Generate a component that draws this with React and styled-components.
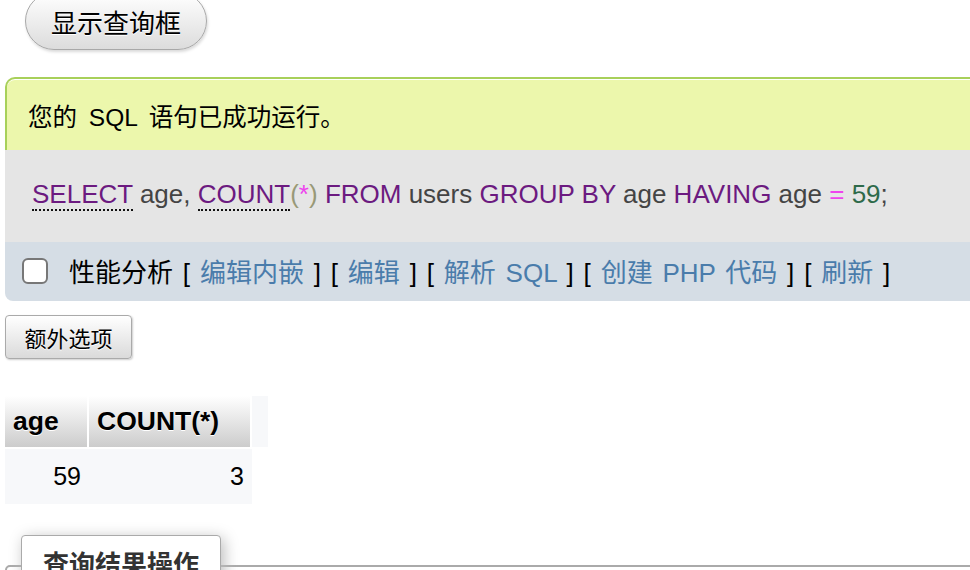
import React from 'react';
import styled, { createGlobalStyle } from 'styled-components';

const GlobalStyle = createGlobalStyle`
  html, body {
    margin: 0;
    padding: 0;
    background: #fff;
    overflow: hidden;
  }
  body {
    font-family: "Liberation Sans", "Noto Sans CJK SC", sans-serif;
    color: #000;
  }
`;

const Page = styled.div`
  display: flex;
  flex-direction: column;
  align-items: flex-start;
  padding-left: 5px;
  width: 1100px;
`;

const PillButton = styled.button`
  margin: -8px 0 0 20px;
  width: 182px;
  height: 58px;
  padding: 0 0 0;
  border: 1px solid #a8a8a8;
  border-radius: 30px;
  background: linear-gradient(#ffffff, #dcdcdc);
  box-shadow: 1px 2px 3px rgba(0, 0, 0, 0.15);
  font-family: inherit;
  font-size: 26px;
  color: #000;
  text-shadow: 0 1px 0 #fff;
`;

const ResultBox = styled.div`
  margin-top: 27px;
  width: 1060px;
  display: flex;
  flex-direction: column;
`;

const Success = styled.div`
  height: 69px;
  display: flex;
  align-items: center;
  padding: 2px 0 0 21px;
  background: #ecf7ac;
  border-top: 2px solid #a8d05a;
  border-left: 2px solid #a8d05a;
  border-top-left-radius: 10px;
  box-shadow: inset 0 1px 0 #fff;
  font-size: 24.5px;
  word-spacing: 5px;
  white-space: pre;
`;

const SqlBlock = styled.div`
  height: 88px;
  display: flex;
  align-items: center;
  padding: 0 0 4px 27px;
  background: #e5e5e5;
  font-size: 26px;
  color: #444;
`;

const Code = styled.code`
  font-family: inherit;
  white-space: pre;
`;

const Kw = styled.span`
  color: #6c1a80;
  ${(p) => p.$doc && 'border-bottom: 2px dotted #111; line-height: 1.05;'}
`;

const Bracket = styled.span`
  color: #999977;
`;

const Op = styled.span`
  color: #ee44ee;
`;

const Num = styled.span`
  color: #2e6a4a;
`;

const Tools = styled.div`
  height: 57px;
  display: flex;
  align-items: center;
  padding: 0 0 2px 17px;
  background: #d5dde5;
  border-bottom-left-radius: 8px;
  font-size: 26px;
`;

const ToolText = styled.span`
  white-space: pre;
  word-spacing: 2.6px;
`;

const Check = styled.input`
  appearance: none;
  margin: 0 21px 0 0;
  width: 26px;
  height: 26px;
  border: 2px solid #777;
  border-radius: 6px;
  background: #fff;
`;

const ToolLink = styled.a`
  color: #4a7cab;
  text-decoration: none;
`;

const PlainButton = styled.button`
  margin-top: 14px;
  width: 127px;
  height: 44px;
  padding: 0;
  border: 1px solid #aaa;
  border-radius: 4px;
  background: linear-gradient(#ffffff, #dadada);
  box-shadow: 1px 1px 2px rgba(0, 0, 0, 0.2);
  font-family: inherit;
  font-size: 22px;
  color: #000;
  text-shadow: 0 1px 0 #fff;
`;

const Table = styled.table`
  margin-top: 37px;
  border-collapse: separate;
  border-spacing: 0;
  font-size: 26.5px;
`;

const Th = styled.th`
  height: 53px;
  padding: 0 8px;
  border-right: 2px solid #fff;
  border-bottom: 2px solid #fff;
  background: ${(p) => (p.$blank ? '#f7f8fa' : 'linear-gradient(#ffffff, #cccccc)')};
  width: ${(p) => p.$w}px;
  box-sizing: border-box;
  text-align: left;
  font-weight: bold;
  text-shadow: 0 1px 0 #fff;
`;

const Td = styled.td`
  height: 55px;
  padding: 0 8px;
  background: #f7f8fa;
  text-align: right;
  font-size: 25px;
`;

const Fieldset = styled.fieldset`
  margin: 31px 0 0;
  width: 1060px;
  padding: 0 0 0 14px;
  border: 2px solid #aaa;
  border-radius: 5px;
`;

const Legend = styled.legend`
  height: 60px;
  padding: 0 21px;
  border: 1px solid #aaa;
  border-radius: 4px 4px 0 0;
  background: #fff;
  box-shadow: 3px 3px 15px #bbb;
  font-size: 26px;
  font-weight: bold;
  color: #333;
  line-height: 58px;
`;

const links = ['编辑内嵌', '编辑', '解析 SQL', '创建 PHP 代码', '刷新'];

export default function App() {
  return (
    <Page>
      <GlobalStyle />
      <PillButton>显示查询框</PillButton>
      <ResultBox>
        <Success>您的 SQL 语句已成功运行。</Success>
        <SqlBlock>
          <Code>
            <Kw $doc>SELECT</Kw>{' age, '}
            <Kw $doc>COUNT</Kw>
            <Bracket>(</Bracket>
            <Op>*</Op>
            <Bracket>)</Bracket>{' '}
            <Kw>FROM</Kw>{' users '}
            <Kw>GROUP BY</Kw>{' age '}
            <Kw>HAVING</Kw>{' age '}
            <Op>=</Op>{' '}
            <Num>59</Num>;
          </Code>
        </SqlBlock>
        <Tools>
          <Check type="checkbox" />
          <ToolText>
            {'性能分析 '}
            {links.map((l, i) => (
              <span key={l}>
                {i > 0 ? ' [ ' : '[ '}
                <ToolLink href="#">{l}</ToolLink>
                {' ]'}
              </span>
            ))}
          </ToolText>
        </Tools>
      </ResultBox>
      <PlainButton>额外选项</PlainButton>
      <Table>
        <thead>
          <tr>
            <Th $w={84}>age</Th>
            <Th $w={163}>COUNT(*)</Th>
            <Th $blank $w={16}></Th>
          </tr>
        </thead>
        <tbody>
          <tr>
            <Td>59</Td>
            <Td>3</Td>
          </tr>
        </tbody>
      </Table>
      <Fieldset>
        <Legend>查询结果操作</Legend>
      </Fieldset>
    </Page>
  );
}
